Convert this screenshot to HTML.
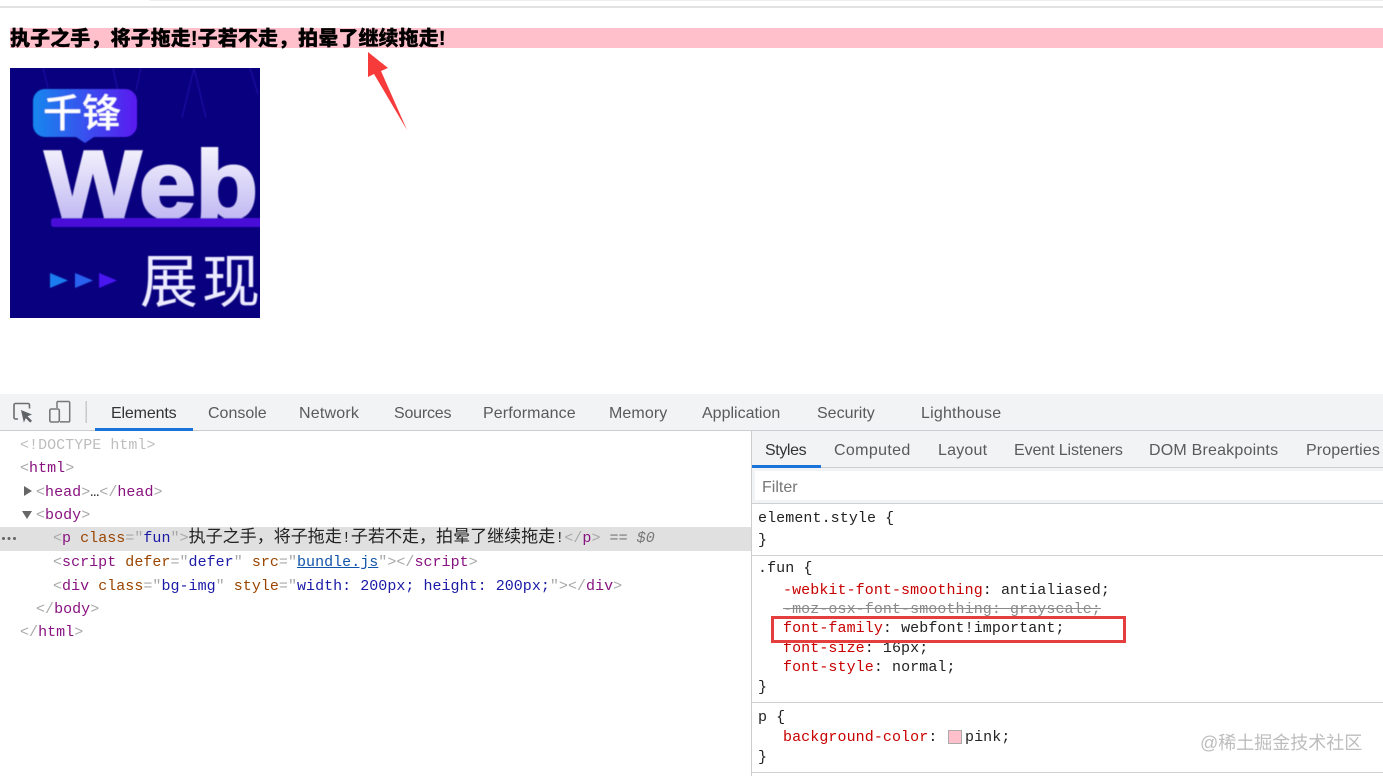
<!DOCTYPE html>
<html><head><meta charset="utf-8">
<style>
html,body{margin:0;padding:0;background:#fff;width:1383px;height:776px;overflow:hidden}
body{position:relative;font-family:"Liberation Sans","Noto Sans CJK SC",sans-serif}
.a{position:absolute}
.t{position:absolute;white-space:pre;font-size:16px;line-height:20px;color:#5a5a5a}
.m{position:absolute;white-space:pre;font-family:"Liberation Mono","Noto Sans CJK SC",monospace;font-size:15px;letter-spacing:.08px;line-height:20px;color:#222}
.e{letter-spacing:.03px}
.b{color:#a8a8a8}.n{color:#881280}.k{color:#994500}.v{color:#1a1aa6}.p{color:#c80000}
.c{font-size:17px}
</style></head>
<body>
<div class="a" style="left:150px;top:0;width:1233px;height:1px;background:#eee"></div>
<div class="a" style="left:0;top:6px;width:1383px;height:2px;background:#e2e2e2"></div>
<div class="a" style="left:10px;top:28px;width:1373px;height:20px;background:#ffc0cb"></div>
<div class="a" style="left:10px;top:27px;white-space:pre;font-size:20px;letter-spacing:.1px;line-height:24px;font-weight:900;-webkit-text-stroke:.3px #000;color:#000;font-family:'Liberation Sans','Noto Sans CJK SC',sans-serif">执子之手，将子拖走!子若不走，拍晕了继续拖走!</div>

<svg class="a" style="left:10px;top:68px;overflow:hidden" width="250" height="250" viewBox="10 68 250 250">
<defs>
<linearGradient id="g1" x1="0" x2="1"><stop offset="0" stop-color="#1787ee"/><stop offset="1" stop-color="#5a1af0"/></linearGradient>
<linearGradient id="g2" x1="0" x2="0" y1="0" y2="1"><stop offset="0" stop-color="#fff"/><stop offset="1" stop-color="#b4aaf0"/></linearGradient>
<filter id="bl" x="-5%" y="-5%" width="110%" height="110%"><feGaussianBlur stdDeviation=".6"/></filter>
</defs>
<rect x="10" y="68" width="250" height="250" fill="#09007f"/>
<g filter="url(#bl)">
<g stroke="#2a10b0" stroke-width="1.500" fill="none" opacity=".6">
<path d="M43 68l5 20M113 68l5 24M141 68l-5 22M194 68l-12 50M194 68l12 50M250 68l8 26"/>
</g>
<path d="M45 89h80a12 12 0 0 1 12 12v24a12 12 0 0 1-12 12H94l-9 6-9-6H45a12 12 0 0 1-12-12v-24a12 12 0 0 1 12-12z" fill="url(#g1)"/>
<text x="43" y="127" font-family="'Noto Sans CJK SC',sans-serif" font-weight="500" font-size="39" fill="#fff">千锋</text>
<text transform="translate(45 217) scale(1.07 1)" font-family="'Liberation Sans',sans-serif" font-weight="700" font-size="95" fill="url(#g2)" stroke="url(#g2)" stroke-width="3">Web</text>
<rect x="51" y="218" width="215" height="9" rx="3" fill="#4a10d8"/>
<path d="M50 273l18 7.500-18 7.500z" fill="#1d7df0"/>
<path d="M75 273l18 7.500-18 7.500z" fill="#2a62f0"/>
<path d="M99 273l18 7.500-18 7.500z" fill="#4a15f0"/>
<text x="140" y="302" font-family="'Noto Sans CJK SC',sans-serif" font-weight="400" font-size="58" letter-spacing="4" fill="#ecebff">展现</text>
</g>
</svg>
<svg class="a" style="left:360px;top:48px" width="52" height="86" viewBox="360 48 52 86">
<path d="M368 52L388 68 381 71 407 130 374 74 368 77z" fill="#f73b3b"/>
</svg>

<!-- devtools toolbar -->
<div class="a" style="left:0;top:394px;width:1383px;height:36px;background:#f1f3f4"></div>
<div class="a" style="left:0;top:430px;width:1383px;height:1px;background:#cbcdd0"></div>
<svg class="a" style="left:0;top:394px" width="95" height="36" viewBox="0 394 95 36" fill="none">
<path d="M18 419h-2.500a1.500 1.500 0 0 1-1.500-1.500V405a1.500 1.500 0 0 1 1.500-1.500h12.500a1.500 1.500 0 0 1 1.500 1.500v3.500" stroke="#6e6e6e" stroke-width="1.600"/>
<path d="M21 410l11 4.500-4.500 1.800 4.500 4.500-1.800 1.800-4.500-4.500-1.800 4.500z" fill="#5f6368"/>
<path d="M57 401.500h11.500a1.200 1.200 0 0 1 1.200 1.200v18a1.200 1.200 0 0 1-1.200 1.200H60M57 401.500V408" stroke="#777" stroke-width="1.500"/>
<rect x="49.800" y="409" width="9.500" height="13" rx="1.500" stroke="#777" stroke-width="1.600"/>
<rect x="85.500" y="401" width="1.500" height="22" fill="#c8c9cb"/>
</svg>
<div class="t" style="left:111px;top:404px;color:#333;letter-spacing:-.15px">Elements</div>
<div class="t" style="left:208px;top:404px">Console</div>
<div class="t" style="left:299px;top:404px;letter-spacing:.2px">Network</div>
<div class="t" style="left:394px;top:404px;letter-spacing:-.2px">Sources</div>
<div class="t" style="left:483px;top:404px;letter-spacing:.1px">Performance</div>
<div class="t" style="left:609px;top:404px;letter-spacing:.1px">Memory</div>
<div class="t" style="left:702px;top:404px">Application</div>
<div class="t" style="left:817px;top:404px">Security</div>
<div class="t" style="left:921px;top:404px;letter-spacing:.2px">Lighthouse</div>
<div class="a" style="left:95px;top:428px;width:98px;height:3px;background:#1a73d8"></div>

<!-- elements panel -->
<div class="a" style="left:0;top:527px;width:751px;height:24px;background:#e0e0e0"></div>
<div class="a" style="left:751px;top:431px;width:1px;height:345px;background:#cbcdd0"></div>
<div class="m e b" style="left:20px;top:436px;color:#bdbdbd">&lt;!DOCTYPE html&gt;</div>
<div class="m e" style="left:20px;top:459px"><span class="b">&lt;</span><span class="n">html</span><span class="b">&gt;</span></div>
<div class="a" style="left:24px;top:486px;width:0;height:0;border-left:8px solid #666;border-top:5px solid transparent;border-bottom:5px solid transparent"></div>
<div class="m e" style="left:36px;top:483px"><span class="b">&lt;</span><span class="n">head</span><span class="b">&gt;</span>…<span class="b">&lt;/</span><span class="n">head</span><span class="b">&gt;</span></div>
<div class="a" style="left:22px;top:511px;width:0;height:0;border-top:8px solid #666;border-left:5px solid transparent;border-right:5px solid transparent"></div>
<div class="m e" style="left:36px;top:506px"><span class="b">&lt;</span><span class="n">body</span><span class="b">&gt;</span></div>
<div class="a" style="left:2px;top:537px;width:15px;height:3px;background:radial-gradient(circle at 1.500px 1.500px,#666 1.400px,transparent 1.600px) 0 0/5.500px 3px repeat-x"></div>
<div class="m e" style="left:53px;top:529px"><span class="b">&lt;</span><span class="n">p</span> <span class="k">class</span><span class="b">="</span><span class="v">fun</span><span class="b">"&gt;</span><span class="c">执子之手，将子拖走</span>!<span class="c">子若不走，拍晕了继续拖走</span>!<span class="b">&lt;/</span><span class="n">p</span><span class="b">&gt;</span> <span style="color:#777">== <i>$0</i></span></div>
<div class="m e" style="left:53px;top:553px"><span class="b">&lt;</span><span class="n">script</span> <span class="k">defer</span><span class="b">="</span><span class="v">defer</span><span class="b">"</span> <span class="k">src</span><span class="b">="</span><span style="color:#1155aa;text-decoration:underline">bundle.js</span><span class="b">"&gt;&lt;/</span><span class="n">script</span><span class="b">&gt;</span></div>
<div class="m e" style="left:53px;top:577px"><span class="b">&lt;</span><span class="n">div</span> <span class="k">class</span><span class="b">="</span><span class="v">bg-img</span><span class="b">"</span> <span class="k">style</span><span class="b">="</span><span class="v">width: 200px; height: 200px;</span><span class="b">"&gt;&lt;/</span><span class="n">div</span><span class="b">&gt;</span></div>
<div class="m e" style="left:36px;top:600px"><span class="b">&lt;/</span><span class="n">body</span><span class="b">&gt;</span></div>
<div class="m e" style="left:20px;top:623px"><span class="b">&lt;/</span><span class="n">html</span><span class="b">&gt;</span></div>

<!-- styles panel -->
<div class="a" style="left:752px;top:431px;width:631px;height:73px;background:#f1f3f4"></div>
<div class="a" style="left:752px;top:467px;width:631px;height:1px;background:#cbcdd0"></div>
<div class="t" style="left:765px;top:441px;color:#333;letter-spacing:-.4px">Styles</div>
<div class="t" style="left:834px;top:441px;letter-spacing:.35px">Computed</div>
<div class="t" style="left:938px;top:441px;letter-spacing:.2px">Layout</div>
<div class="t" style="left:1014px;top:441px;letter-spacing:-.1px">Event Listeners</div>
<div class="t" style="left:1149px;top:441px;letter-spacing:.2px">DOM Breakpoints</div>
<div class="t" style="left:1306px;top:441px;letter-spacing:.1px">Properties</div>
<div class="a" style="left:752px;top:465px;width:69px;height:3px;background:#1a73d8"></div>
<div class="a" style="left:755px;top:471px;width:628px;height:29px;background:#fff"></div>
<div class="t" style="left:762px;top:478px;color:#777">Filter</div>
<div class="a" style="left:752px;top:503px;width:631px;height:1px;background:#cfd0d2"></div>
<div class="m" style="left:758px;top:509px">element.style {</div>
<div class="m" style="left:758px;top:531px">}</div>
<div class="a" style="left:752px;top:555px;width:631px;height:1px;background:#d0d0d0"></div>
<div class="m" style="left:758px;top:559px">.fun {</div>
<div class="m" style="left:783px;top:581px"><span class="p">-webkit-font-smoothing</span>: antialiased;</div>
<div class="m" style="left:783px;top:600px;color:#8a8a8a;text-decoration:line-through">-moz-osx-font-smoothing: grayscale;</div>
<div class="m" style="left:783px;top:619px"><span class="p">font-family</span>: webfont!important;</div>
<div class="m" style="left:783px;top:639px"><span class="p">font-size</span>: 16px;</div>
<div class="m" style="left:783px;top:658px"><span class="p">font-style</span>: normal;</div>
<div class="m" style="left:758px;top:678px">}</div>
<div class="a" style="left:771px;top:616px;width:349px;height:21px;border:3px solid #e53e3e"></div>
<div class="a" style="left:752px;top:702px;width:631px;height:1px;background:#d0d0d0"></div>
<div class="m" style="left:758px;top:708px">p {</div>
<div class="m" style="left:783px;top:728px"><span class="p">background-color</span>:</div>
<div class="a" style="left:948px;top:730px;width:12px;height:12px;background:#ffc0cb;border:1px solid #aaa"></div>
<div class="m" style="left:965px;top:728px">pink;</div>
<div class="m" style="left:758px;top:748px">}</div>
<div class="a" style="left:752px;top:772px;width:631px;height:1px;background:#d0d0d0"></div>
<div class="a" style="left:1200px;top:732px;white-space:pre;font-size:18px;line-height:22px;color:#bdbdbd;font-family:'Liberation Sans','Noto Sans CJK SC',sans-serif">@稀土掘金技术社区</div>
</body></html>
